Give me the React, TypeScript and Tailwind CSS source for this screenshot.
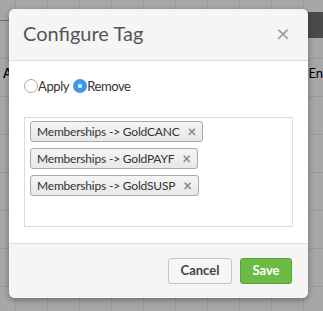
import { useState } from "react";

const tags = ["Memberships -> GoldCANC", "Memberships -> GoldPAYF", "Memberships -> GoldSUSP"];

const Radio = ({ checked, label, onClick }: { checked: boolean; label: string; onClick: () => void }) => (
  <label className="flex items-center cursor-pointer" onClick={onClick}>
    {checked ? (
      <span className="flex h-[14px] w-[14px] items-center justify-center rounded-full bg-[#3d97f5]">
        <span className="h-[4px] w-[4px] rounded-full bg-white" />
      </span>
    ) : (
      <span className="h-[14px] w-[14px] rounded-full border border-[#a8a8a8] bg-white" />
    )}
    <span className="text-[13px] leading-none tracking-[-0.4px] text-[#333]">{label}</span>
  </label>
);

export default function App() {
  const [mode, setMode] = useState("remove");

  return (
    <div
      className="relative h-[311px] w-[323px] overflow-hidden bg-[#a7a7a7] bg-[linear-gradient(to_right,#9a9a9a_1px,transparent_1px),linear-gradient(to_bottom,#9a9a9a_1px,transparent_1px)] bg-[size:32px_38px] bg-[position:15px_20px]"
      style={{ fontFamily: 'Lato, "Liberation Sans", sans-serif' }}
    >
      {/* bits of the page behind the overlay */}
      <div className="absolute left-0 top-[20px] h-[1px] w-[10px] bg-[#5a6f94]" />
      <div className="absolute left-[3px] top-[64px] text-[13px] font-semibold text-black">A</div>
      <div className="absolute right-0 top-[64px] text-[13px] text-black">En</div>
      <div className="absolute right-0 top-[12px] h-[26px] w-[16px] bg-[#4a4a4a]" />

      <div className="absolute left-[9px] top-[9px] flex h-[289px] w-[299px] flex-col overflow-hidden rounded-[6px] bg-white shadow-[0_2px_6px_rgba(0,0,0,0.35)]">
        <div className="flex h-[53px] items-center justify-between border-b border-[#dcdcdc] bg-[#f5f5f5] pb-[4px] pl-[14px] pr-[18px]">
          <h2 className="text-[20px] leading-none text-[#555]">Configure Tag</h2>
          <button className="text-[24px] leading-none text-[#a0a0a0]">×</button>
        </div>

        <div className="flex flex-1 flex-col px-[15px] pb-[16px] pt-[18px]">
          <div className="flex items-center gap-[4px]">
            <Radio checked={mode === "apply"} label="Apply" onClick={() => setMode("apply")} />
            <Radio checked={mode === "remove"} label="Remove" onClick={() => setMode("remove")} />
          </div>

          <div className="mt-[24px] flex h-[110px] flex-col items-start gap-[6px] border border-[#dcdcdc] px-[5px] pt-[3px]">
            {tags.map((t) => (
              <span
                key={t}
                className="flex h-[21px] items-center gap-[8px] rounded-[3px] border border-[#aaaaaa] bg-[linear-gradient(#f4f4f4,#e8e8e8)] pl-[6px] pr-[6px] text-[12px] tracking-[-0.2px] text-[#333]"
              >
                {t}
                <span className="text-[15px] font-bold leading-none text-[#888]">×</span>
              </span>
            ))}
          </div>
        </div>

        <div className="flex h-[56px] items-center justify-end gap-[8px] border-t border-[#dcdcdc] bg-[#f5f5f5] pr-[16px]">
          <button className="h-[26px] w-[64px] rounded-[3px] border border-[#c4c4c4] bg-[#f6f6f6] text-[13px] font-bold text-[#444]">
            Cancel
          </button>
          <button className="h-[26px] w-[52px] rounded-[3px] border border-[#57a537] bg-[#6cbb45] text-[13px] font-bold text-white">
            Save
          </button>
        </div>
      </div>
    </div>
  );
}
